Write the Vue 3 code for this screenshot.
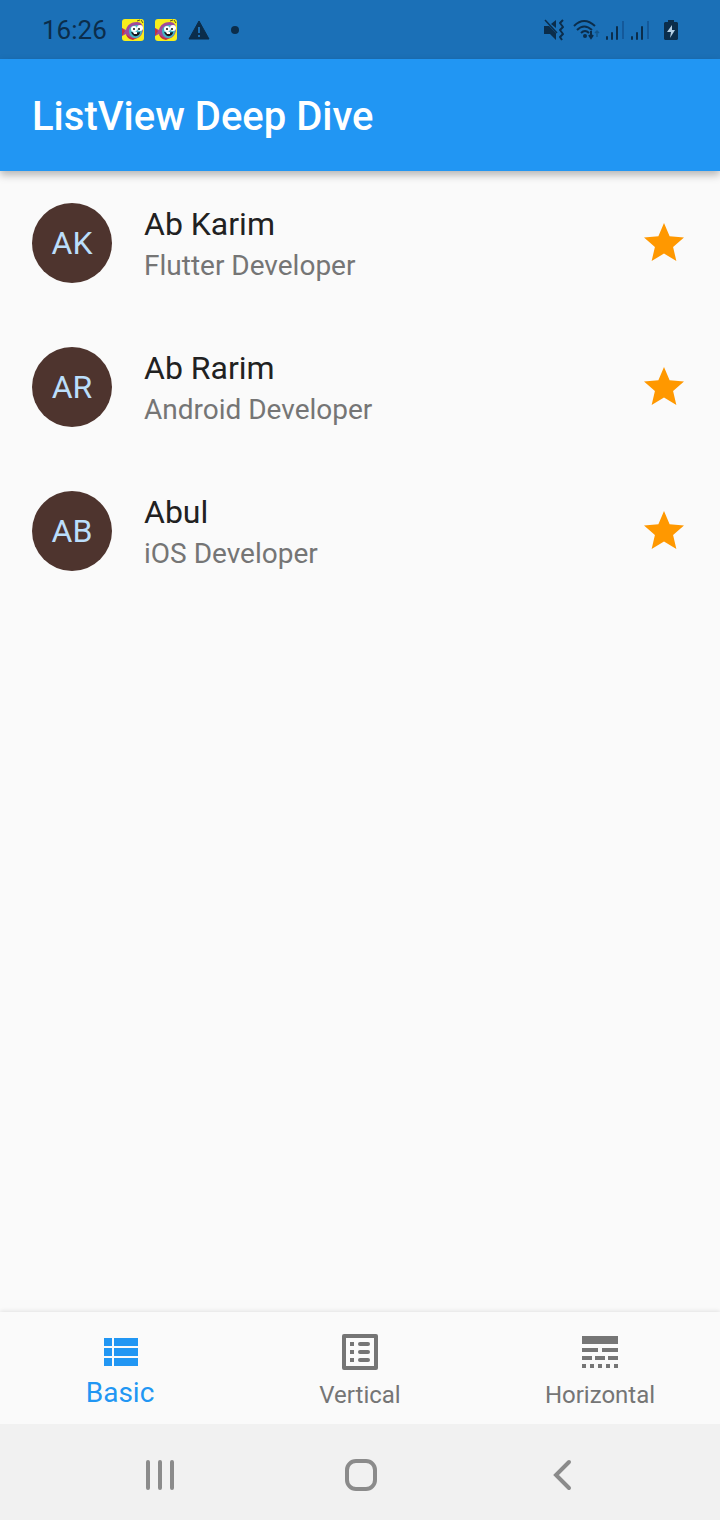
<script setup>
import { ref } from 'vue'

const people = [
  { initials: 'AK', name: 'Ab Karim', role: 'Flutter Developer' },
  { initials: 'AR', name: 'Ab Rarim', role: 'Android Developer' },
  { initials: 'AB', name: 'Abul', role: 'iOS Developer' },
]

const tabs = [
  {
    label: 'Basic',
    icon: 'M4 14h4v-4H4v4zm0 5h4v-4H4v4zM4 9h4V5H4v4zm5 5h12v-4H9v4zm0 5h12v-4H9v4zM9 5v4h12V5H9z',
  },
  {
    label: 'Vertical',
    icon: 'M19 5v14H5V5h14m1-2H4a1 1 0 0 0-1 1v16a1 1 0 0 0 1 1h16a1 1 0 0 0 1-1V4a1 1 0 0 0-1-1zM7 7h2v2H7zM7 11h2v2H7zM7 15h2v2H7zM12 7h4a1 1 0 0 1 0 2h-4a1 1 0 0 1 0-2zM12 11h4a1 1 0 0 1 0 2h-4a1 1 0 0 1 0-2zM12 15h4a1 1 0 0 1 0 2h-4a1 1 0 0 1 0-2z',
  },
  {
    label: 'Horizontal',
    icon: 'M3 16h5v-2H3v2zm6.500 0h5v-2h-5v2zm6.500 0h5v-2h-5v2zM3 20h2v-2H3v2zm4 0h2v-2H7v2zm4 0h2v-2h-2v2zm4 0h2v-2h-2v2zm4 0h2v-2h-2v2zM3 12h8v-2H3v2zm10 0h8v-2h-8v2zM3 4v4h18V4H3z',
  },
]

const active = ref('Basic')
</script>

<template>
  <div class="screen">
    <div class="status">
      <time class="clock">16:26</time>
      <div class="notices">
        <svg v-for="n in 2" :key="n" class="fish" viewBox="0 0 22 22" width="22" height="22">
          <rect width="22" height="22" rx="3" fill="#f6ee1c" />
          <path d="M0 9l4 2c1-5 5-8 11-8 4 0 6 3 6 7 0 6-4 10-10 10-4 0-6-2-7-5l-4 2z" fill="#a04a9b" />
          <path d="M0 9l3 3-3 5zM4 15q4 5 11 4l-4 2q-6-1-7-6z" fill="#c4323f" />
          <path d="M7 12c0-4 4-6 8-6 4 1 6 4 5 7-1 4-4 6-7 6s-6-3-6-7z" fill="#45b4c3" />
          <circle cx="12" cy="10" r="3" fill="#fff" />
          <circle cx="18" cy="9" r="3" fill="#fff" />
          <circle cx="12" cy="10" r="1" fill="#111" />
          <circle cx="17" cy="10" r="1" fill="#111" />
          <path d="M9 13q4 1 9 0c0 5-7 6-9 0z" fill="#18151d" />
          <path d="M11 13h4v2h-3z" fill="#fff" />
          <path d="M15 2l3-1M19 1l2 3" stroke="#5c5420" fill="none" />
        </svg>
        <svg class="warning" viewBox="0 0 22 20" width="22" height="20">
          <path d="M11 1L21 19H1z" fill="#0b2d4b" stroke="#0b2d4b" stroke-width="1" stroke-linejoin="round" />
          <path d="M10 7h2v6h-2zM10 15h2v2h-2z" fill="#1b70b7" />
        </svg>
        <span class="dot"></span>
      </div>
      <div class="system">
        <svg viewBox="0 0 22 22" width="22" height="22">
          <path d="M1 7h5l2 2 5 5v7l-6-6H1zM8 5l5-4v8z" fill="#0b2d4b" />
          <path d="M2 1l12 13" stroke="#0b2d4b" stroke-width="1.500" />
          <path d="M20 1l-3 3 3 4-3 3 3 4-3 3 2 3" stroke="#0b2d4b" stroke-width="2" stroke-linejoin="round" fill="none" />
        </svg>
        <svg class="wifi" viewBox="0 0 27 22" width="27" height="22">
          <g fill="none" stroke="#0b2d4b" stroke-width="2">
            <path d="M1 7q10-10 21 0" />
            <path d="M4 11q7-7 15 0" />
            <path d="M8 14q4-4 8 0" />
            <path d="M18 12v7M16 16l2 3 2-3" />
          </g>
          <circle cx="12" cy="17" r="2" fill="#0b2d4b" />
          <path d="M24 18v-6M22 14l2-2 2 2" fill="none" stroke="#13568c" stroke-width="1.500" />
        </svg>
        <svg v-for="n in 2" :key="n" class="signal" viewBox="0 0 19 20" width="19" height="20">
          <path d="M1 17v2M6 13v6M11 7v12" stroke="#0b2d4b" stroke-width="2" stroke-linecap="round" />
          <path d="M17 1v18" stroke="#14599a" stroke-width="2" />
        </svg>
        <svg class="battery" viewBox="0 0 14 22" width="14" height="22">
          <path d="M4 1h6v2h3l1 1v16l-1 1H1l-1-1V4l1-1h3z" fill="#0b2d4b" />
          <path d="M8 6L3 13h4l-1 6 5-8H8z" fill="#b5cfe4" />
        </svg>
      </div>
    </div>

    <header class="appbar">
      <h1>ListView Deep Dive</h1>
    </header>

    <main>
      <ul class="list">
        <li v-for="p in people" :key="p.initials" class="tile">
          <span class="avatar">{{ p.initials }}</span>
          <div class="info">
            <span class="name">{{ p.name }}</span>
            <span class="role">{{ p.role }}</span>
          </div>
          <svg class="star" viewBox="0 0 24 24" width="48" height="48" fill="#ff9800">
            <path d="M12 17.270L18.180 21l-1.640-7.030L22 9.240l-7.190-.61L12 2 9.190 8.630 2 9.240l5.460 4.730L5.820 21z" />
          </svg>
        </li>
      </ul>
    </main>

    <nav class="tabs">
      <button
        v-for="t in tabs"
        :key="t.label"
        type="button"
        class="tab"
        :class="{ active: active === t.label }"
        @click="active = t.label"
      >
        <svg viewBox="0 0 24 24" width="48" height="48" fill="currentColor"><path :d="t.icon" /></svg>
        <span>{{ t.label }}</span>
      </button>
    </nav>

    <div class="system-nav">
      <button type="button" aria-label="Recent apps">
        <svg viewBox="0 0 34 34" width="34" height="34">
          <path d="M4 4v26M16 4v26M28 4v26" />
        </svg>
      </button>
      <button type="button" aria-label="Home">
        <svg viewBox="0 0 34 34" width="34" height="34">
          <rect x="4" y="3" width="28" height="28" rx="9" />
        </svg>
      </button>
      <button type="button" aria-label="Back">
        <svg viewBox="0 0 34 34" width="34" height="34">
          <path d="M27 4L14 17l13 13" />
        </svg>
      </button>
    </div>
  </div>
</template>

<style>
body {
  margin: 0;
  background: #fafafa;
}
</style>

<style scoped>
.screen {
  display: flex;
  flex-direction: column;
  min-height: 100vh;
  background: #fafafa;
  font-family: Roboto, "Liberation Sans", sans-serif;
}

.screen svg {
  display: block;
  flex: none;
}

.status {
  display: flex;
  align-items: center;
  height: 59px;
  padding: 0 42px;
  box-sizing: border-box;
  background: #1b70b7;
}

.clock {
  color: #0b2d4b;
  font-size: 26px;
  line-height: 32px;
}

.notices {
  display: flex;
  align-items: center;
  gap: 11px;
  margin-left: 15px;
}

.dot {
  width: 8px;
  height: 8px;
  margin-left: 10px;
  border-radius: 50%;
  background: #0b2d4b;
}

.system {
  display: flex;
  align-items: center;
  gap: 6px;
  margin-left: auto;
}

.wifi {
  margin-left: 2px;
}

.battery {
  margin-left: 8px;
}

.appbar {
  position: relative;
  display: flex;
  align-items: center;
  height: 112px;
  padding: 4px 32px 0;
  box-sizing: border-box;
  background: #2196f3;
  box-shadow: 0 4px 8px rgba(0, 0, 0, 0.28);
}

h1 {
  margin: 0;
  color: #fff;
  font-size: 40px;
  font-weight: 500;
  line-height: 48px;
}

main {
  flex: 1;
}

.list {
  margin: 0;
  padding: 0;
  list-style: none;
}

.tile {
  display: flex;
  align-items: center;
  gap: 32px;
  height: 144px;
  padding: 0 32px;
}

.avatar {
  display: flex;
  flex: none;
  align-items: center;
  justify-content: center;
  width: 80px;
  height: 80px;
  border-radius: 50%;
  background: #4e342e;
  color: #bbdefb;
  font-size: 32px;
}

.info {
  display: flex;
  flex: 1;
  flex-direction: column;
  gap: 4px;
  padding-top: 2px;
}

.name {
  color: #212121;
  font-size: 32px;
  line-height: 40px;
}

.role {
  color: #757575;
  font-size: 28px;
  line-height: 36px;
}

.tabs {
  display: flex;
  height: 112px;
  background: #fafafa;
  box-shadow: 0 -1px 4px rgba(0, 0, 0, 0.1);
}

button {
  display: flex;
  align-items: center;
  border: 0;
  padding: 0;
  background: none;
  font-family: inherit;
  cursor: pointer;
}

.tab {
  flex: 1;
  flex-direction: column;
  justify-content: flex-start;
  gap: 3px;
  padding-top: 16px;
  color: #757575;
  font-size: 24px;
  line-height: 32px;
}

.tab.active {
  color: #2196f3;
  font-size: 28px;
  line-height: 28px;
}

.system-nav {
  position: relative;
  display: flex;
  align-items: center;
  justify-content: space-between;
  height: 96px;
  padding: 0 20%;
  background: #f1f1f1;
}

.system-nav button {
  padding: 6px 0 0;
}

.system-nav svg {
  fill: none;
  stroke: #8b8b8b;
  stroke-width: 4;
  stroke-linecap: round;
  stroke-linejoin: miter;
}
</style>
